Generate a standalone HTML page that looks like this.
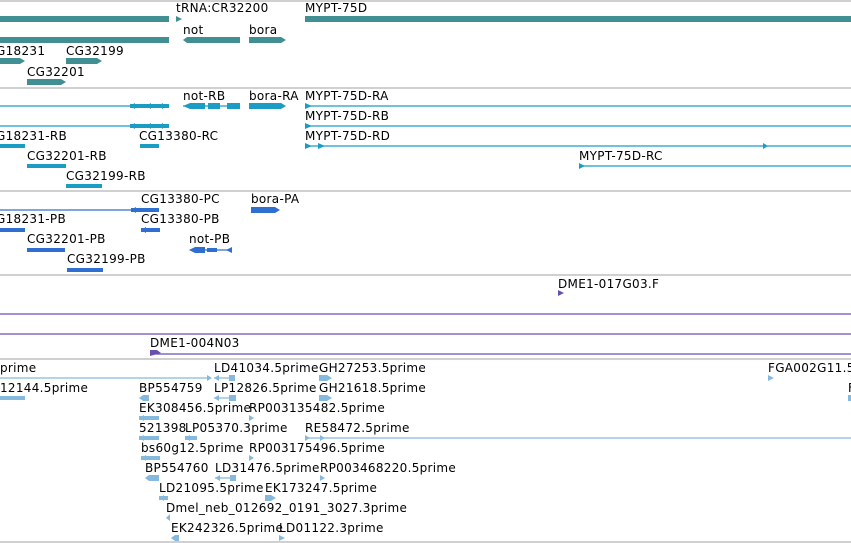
<!DOCTYPE html>
<html><head><meta charset="utf-8"><style>
html,body{margin:0;padding:0;background:#fff;width:851px;height:543px;overflow:hidden}
svg{display:block}
text{font-family:"DejaVu Sans","Liberation Sans",sans-serif;font-size:12px;letter-spacing:0.3px;fill:#000}
</style></head><body>
<svg width="851" height="543" viewBox="0 0 851 543" xmlns="http://www.w3.org/2000/svg">
<g fill="none" stroke="#c0c0c0" stroke-width="1.5">
<line x1="0" y1="1" x2="851" y2="1"/><line x1="0" y1="88" x2="851" y2="88"/>
<line x1="0" y1="191" x2="851" y2="191"/><line x1="0" y1="275" x2="851" y2="275"/>
<line x1="0" y1="359" x2="851" y2="359"/><line x1="0" y1="542" x2="851" y2="542"/>
</g>
<g fill="#428f93">
<rect x="0" y="16" width="169" height="6"/><polygon points="176,16 182,19 176,22"/>
<rect x="305" y="16" width="546" height="6"/>
<rect x="0" y="37" width="169" height="6"/>
<polygon points="183,40 187,37 240,37 240,43 187,43"/>
<polygon points="249,37 281,37 286,40 281,43 249,43"/>
<polygon points="0,58 20,58 25,61 20,64 0,64"/>
<polygon points="66,58 97,58 102,61 97,64 66,64"/>
<polygon points="27,79 61,79 66,82 61,85 27,85"/>
</g>
<text x="176" y="12">tRNA:CR32200</text><text x="305" y="12">MYPT-75D</text>
<text x="183" y="34">not</text><text x="249" y="34">bora</text>
<text x="-4" y="55">G18231</text><text x="66" y="55">CG32199</text>
<text x="27" y="76">CG32201</text>
<g stroke="#1a9cc4" stroke-width="1.3">
<line x1="0" y1="106" x2="165" y2="106"/><line x1="305" y1="106" x2="851" y2="106"/>
<line x1="0" y1="126" x2="165" y2="126"/><line x1="305" y1="126" x2="851" y2="126"/>
<line x1="305" y1="146" x2="851" y2="146"/><line x1="579" y1="166" x2="851" y2="166"/>
<line x1="183" y1="106" x2="240" y2="106"/>
<line x1="140" y1="146" x2="159" y2="146"/>
</g>
<g fill="#1a9cc4">
<rect x="130" y="104" width="39" height="4"/><rect x="130" y="124" width="39" height="4"/>
<polygon points="130,106 135,103 135,109"/><polygon points="146,106 151,103 151,109"/><polygon points="158,106 163,103 163,109"/>
<polygon points="130,126 135,123 135,129"/><polygon points="146,126 151,123 151,129"/><polygon points="158,126 163,123 163,129"/>
<polygon points="183,106 190,103 205,103 205,109 190,109"/><rect x="208" y="103" width="12" height="6"/><rect x="227" y="103" width="13" height="6"/>
<polygon points="249,103 281,103 286,106 281,109 249,109"/>
<polygon points="305,103 312,106 305,109"/><polygon points="305,123 312,126 305,129"/><polygon points="305,143 312,146 305,149"/><polygon points="318,143 325,146 318,149"/>
<polygon points="763,143 768,146 763,149"/><polygon points="579,163 585,166 579,169"/>
<rect x="140" y="144" width="19" height="4"/>
<rect x="0" y="144" width="25" height="4"/><rect x="27" y="164" width="39" height="4"/><rect x="66" y="184" width="36" height="4"/>
</g>
<text x="183" y="100">not-RB</text><text x="249" y="100">bora-RA</text><text x="305" y="100">MYPT-75D-RA</text>
<text x="305" y="120">MYPT-75D-RB</text>
<text x="-4" y="140">G18231-RB</text><text x="139" y="140">CG13380-RC</text><text x="305" y="140">MYPT-75D-RD</text>
<text x="27" y="160">CG32201-RB</text><text x="579" y="160">MYPT-75D-RC</text>
<text x="66" y="180">CG32199-RB</text>
<g stroke="#2f6fd0" stroke-width="1.3">
<line x1="0" y1="210" x2="140" y2="210"/><line x1="190" y1="250" x2="232" y2="250"/>
</g>
<g fill="#2f6fd0">
<rect x="131" y="208" width="28" height="4"/><polygon points="131,210 136,207 136,213"/>
<rect x="141" y="228" width="19" height="4"/><polygon points="141,230 146,227 146,233"/>
<polygon points="251,207 275,207 280,210 275,213 251,213"/>
<rect x="0" y="228" width="25" height="4"/>
<rect x="27" y="248" width="38" height="4"/>
<polygon points="189,250 195,247 205,247 205,253 195,253"/><rect x="207" y="248" width="10" height="4"/><polygon points="226,250 232,247 232,253"/>
<rect x="67" y="268" width="36" height="4"/>
</g>
<text x="141" y="203">CG13380-PC</text><text x="251" y="203">bora-PA</text>
<text x="-4" y="223">G18231-PB</text><text x="141" y="223">CG13380-PB</text>
<text x="27" y="243">CG32201-PB</text><text x="189" y="243">not-PB</text>
<text x="67" y="263">CG32199-PB</text>
<text x="558" y="288">DME1-017G03.F</text>
<polygon points="558,290 564,293 558,296" fill="#6a4fb0"/>
<g stroke="#6a4fb0" stroke-width="1.3">
<line x1="0" y1="314" x2="851" y2="314"/><line x1="0" y1="334" x2="851" y2="334"/>
<line x1="150" y1="354" x2="851" y2="354"/>
</g>
<polygon points="150,350 157,350 161,353 150,356" fill="#6a4fb0"/>
<text x="150" y="347">DME1-004N03</text>
<g stroke="#85b9dd" stroke-width="1.3">
<line x1="0" y1="378" x2="210" y2="378"/><line x1="305" y1="438" x2="851" y2="438"/>
<line x1="214" y1="378" x2="234" y2="378"/><line x1="214" y1="398" x2="236" y2="398"/>
<line x1="215" y1="478" x2="236" y2="478"/>
</g>
<g fill="#85b9dd">
<polygon points="207,375 212,378 207,381"/><polygon points="214,378 219,375 219,381"/><rect x="229" y="375" width="6" height="6"/>
<polygon points="319,375 327,375 332,378 327,381 319,381"/>
<polygon points="768,375 774,378 768,381"/>
<rect x="0" y="396" width="25" height="4"/>
<polygon points="139,398 143,395 149,395 149,401 143,401"/>
<polygon points="214,398 219,395 219,401"/><rect x="229" y="395" width="7" height="6"/>
<polygon points="319,395 327,395 332,398 327,401 319,401"/>
<rect x="848" y="395" width="3" height="6"/>
<rect x="139" y="416" width="20" height="4"/><polygon points="139,418 144,415 144,421"/>
<polygon points="249,415 254,418 249,421"/>
<rect x="139" y="436" width="20" height="4"/><polygon points="139,438 144,435 144,441"/>
<rect x="185" y="436" width="12" height="4"/><polygon points="185,438 190,435 190,441"/>
<polygon points="305,435 310,438 305,441"/><polygon points="320,435 325,438 320,441"/>
<rect x="141" y="456" width="19" height="4"/><polygon points="141,458 146,455 146,461"/>
<polygon points="249,455 254,458 249,461"/>
<polygon points="145,478 149,475 159,475 159,481 149,481"/>
<polygon points="215,478 220,475 220,481"/><rect x="230" y="475" width="6" height="6"/>
<polygon points="320,475 325,478 320,481"/>
<rect x="159" y="496" width="9" height="4"/><polygon points="159,498 164,495 164,501"/>
<polygon points="265,495 271,495 276,498 271,501 265,501"/>
<polygon points="166,518 170,514 170,521"/>
<polygon points="171,538 175,535 179,535 179,541 175,541"/>
<polygon points="279,535 285,538 279,541"/>
</g>
<g style="letter-spacing:0">
<text x="0" y="372">prime</text><text x="214" y="372">LD41034.5prime</text><text x="319" y="372">GH27253.5prime</text><text x="768" y="372">FGA002G11.5</text>
<text x="0" y="392">12144.5prime</text><text x="139" y="392">BP554759</text><text x="214" y="392">LP12826.5prime</text><text x="319" y="392">GH21618.5prime</text><text x="848" y="392">F</text>
<text x="139" y="412">EK308456.5prime</text><text x="249" y="412">RP003135482.5prime</text>
<text x="139" y="432">521398</text><text x="185" y="432">LP05370.3prime</text><text x="305" y="432">RE58472.5prime</text>
<text x="141" y="452">bs60g12.5prime</text><text x="249" y="452">RP003175496.5prime</text>
<text x="145" y="472">BP554760</text><text x="215" y="472">LD31476.5prime</text><text x="320" y="472">RP003468220.5prime</text>
<text x="159" y="492">LD21095.5prime</text><text x="265" y="492">EK173247.5prime</text>
<text x="166" y="512">Dmel_neb_012692_0191_3027.3prime</text>
<text x="171" y="532">EK242326.5prime</text><text x="279" y="532">LD01122.3prime</text>
</g>
</svg>
</body></html>
